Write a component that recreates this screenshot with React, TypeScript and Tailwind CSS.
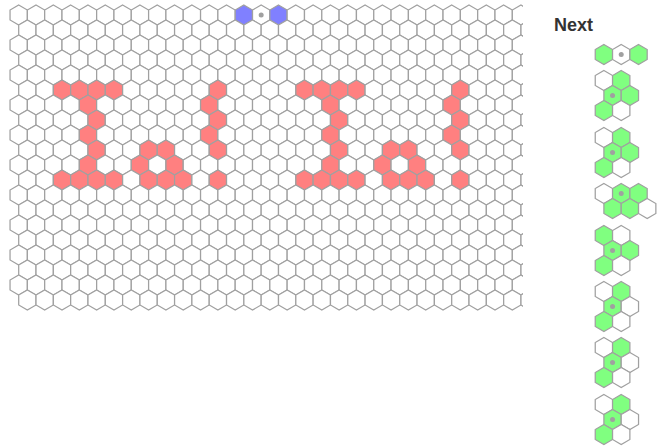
const W = 17.32;
const R = 10;
const STROKE = "#a0a0a0";
const SW = 1.25;

function hexPoints(cx: number, cy: number) {
  const h = W / 2;
  return `${cx},${cy - R} ${cx + h},${cy - R / 2} ${cx + h},${cy + R / 2} ${cx},${cy + R} ${cx - h},${cy + R / 2} ${cx - h},${cy - R / 2}`;
}

const RED: Record<number, number[]> = {
  5: [2, 3, 4, 5, 11, 16, 17, 18, 19, 25],
  6: [4, 11, 18, 25],
  7: [4, 11, 18, 25],
  8: [4, 11, 18, 25],
  9: [4, 7, 8, 11, 18, 21, 22, 25],
  10: [4, 7, 9, 18, 21, 23],
  11: [2, 3, 4, 5, 7, 8, 9, 11, 16, 17, 18, 19, 21, 22, 23, 25],
};

function Board() {
  const cells: { x: number; y: number; fill: string; key: string }[] = [];
  for (let r = 0; r < 20; r++) {
    for (let c = 0; c < 30; c++) {
      let fill = "#ffffff";
      if (RED[r]?.includes(c)) fill = "#ff8080";
      if (r === 0 && (c === 13 || c === 15)) fill = "#8080ff";
      cells.push({ x: 18.7 + (r % 2 ? W / 2 : 0) + W * c, y: 15 + 15 * r, fill, key: `${r}-${c}` });
    }
  }
  return (
    <svg width={523} height={320} className="block shrink-0">
      {cells.map((h) => (
        <polygon key={h.key} points={hexPoints(h.x, h.y)} fill={h.fill} stroke={STROKE} strokeWidth={SW} />
      ))}
      <circle cx={18.7 + W * 14} cy={15} r={2.5} fill="#a0a0a0" />
    </svg>
  );
}

type Piece = { rows: string[] };

const PIECES: Piece[] = [
  { rows: ["gog"] },
  { rows: ["wg", "dg", "gw"] },
  { rows: ["wg", "dg", "gw"] },
  { rows: ["wdg", "ggw"] },
  { rows: ["gw", "dg", "gw"] },
  { rows: ["wg", "dw", "gw"] },
  { rows: ["wg", "dw", "gw"] },
  { rows: ["wg", "dw", "gw"] },
];

function PieceView({ piece }: { piece: Piece }) {
  const height = 21 + 15 * (piece.rows.length - 1);
  const items: { x: number; y: number; t: string; key: string }[] = [];
  piece.rows.forEach((row, r) => {
    row.split("").forEach((t, c) => {
      items.push({ x: 9.9 + (r % 2 ? W / 2 : 0) + W * c, y: 10.5 + 15 * r, t, key: `${r}-${c}` });
    });
  });
  return (
    <svg width={66} height={height} className="block overflow-visible">
      {items.map((h) => (
        <polygon
          key={h.key}
          points={hexPoints(h.x, h.y)}
          fill={h.t === "g" || h.t === "d" ? "#80ff80" : "#ffffff"}
          stroke={STROKE}
          strokeWidth={SW}
        />
      ))}
      {items
        .filter((h) => h.t === "d" || h.t === "o")
        .map((h) => (
          <circle key={h.key} cx={h.x} cy={h.y} r={2.5} fill="#a0a0a0" />
        ))}
    </svg>
  );
}

export default function App() {
  return (
    <div className="flex h-[448px] w-[663px] overflow-hidden bg-white font-['Liberation_Sans',Arial,sans-serif]">
      <Board />
      <div className="flex flex-col pl-[31px]">
        <h2 className="mt-[15px] text-[18px] leading-[21px] font-bold text-[#333333]">Next</h2>
        <div className="mt-[8px] ml-[40px] flex flex-col gap-[5.4px]">
          {PIECES.map((p, i) => (
            <PieceView key={i} piece={p} />
          ))}
        </div>
      </div>
    </div>
  );
}
